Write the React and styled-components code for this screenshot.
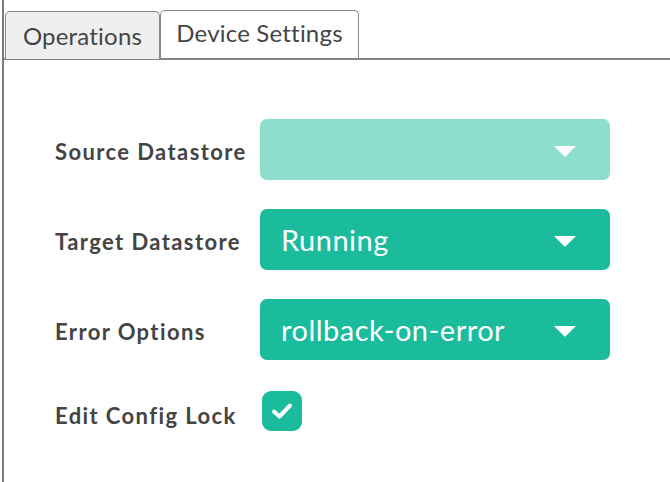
import React from 'react';
import styled, { createGlobalStyle } from 'styled-components';

const GlobalStyle = createGlobalStyle`
  html, body {
    margin: 0;
    padding: 0;
    background: #fff;
    font-family: Lato, "Open Sans", sans-serif;
  }
`;

const Panel = styled.div`
  width: 670px;
  height: 482px;
  box-sizing: border-box;
  margin-left: 2px;
  border-left: 2px solid #7a7a7a;
`;

const TabBar = styled.div`
  display: flex;
  padding: 10px 0 0 1px;
  border-bottom: 2px solid #858585;
`;

const Tab = styled.div`
  box-sizing: border-box;
  height: 48px;
  width: ${(p) => p.width}px;
  margin-bottom: -1px;
  display: flex;
  align-items: center;
  justify-content: center;
  font-size: 24px;
  letter-spacing: 0.2px;
  color: #454545;
  background: ${(p) => (p.active ? '#efefef' : '#fff')};
  border: 1.5px solid #8a8a8a;
  border-bottom: none;
  border-radius: 5px 5px 0 0;
  padding-bottom: ${(p) => (p.active ? '0' : '4px')};
  margin-top: ${(p) => (p.active ? '1px' : '0')};
`;

const Form = styled.div`
  display: flex;
  flex-direction: column;
  gap: 29px;
  padding: 59px 0 0 51px;
`;

const Row = styled.div`
  display: flex;
  align-items: center;
  padding-top: ${(p) => (p.last ? '2px' : '0')};
`;

const Label = styled.div`
  width: 205px;
  font-size: 22px;
  font-weight: 700;
  letter-spacing: 1.4px;
  color: #444;
  padding-top: ${(p) => (p.last ? '8px' : '3px')};
`;

const Select = styled.div`
  box-sizing: border-box;
  width: 350px;
  height: 61px;
  border-radius: 7px;
  background: ${(p) => (p.disabled ? '#8edece' : '#1abc9c')};
  display: flex;
  align-items: center;
  justify-content: space-between;
  padding: 0 33px 0 21px;
  color: #fff;
  font-size: 29px;
  letter-spacing: 0.5px;
`;

const Caret = styled.svg`
  width: 24px;
  height: 12px;
  margin-top: 2px;
`;

const Check = styled.div`
  width: 40px;
  height: 40px;
  margin: 0 0 0 2px;
  border-radius: 9px;
  background: #1abc9c;
  display: flex;
  align-items: center;
  justify-content: center;
`;

const Dropdown = ({ value, disabled }) => (
  <Select disabled={disabled}>
    <span>{value}</span>
    <Caret viewBox="0 0 24 12">
      <path d="M1 1 H23 L13 11 Q12 12 11 11 Z" fill="#fff" />
    </Caret>
  </Select>
);

export default function App() {
  return (
    <>
      <GlobalStyle />
      <Panel>
        <TabBar>
          <Tab active width={155}>Operations</Tab>
          <Tab width={199}>Device Settings</Tab>
        </TabBar>
        <Form>
          <Row>
            <Label>Source Datastore</Label>
            <Dropdown disabled value="" />
          </Row>
          <Row>
            <Label>Target Datastore</Label>
            <Dropdown value="Running" />
          </Row>
          <Row>
            <Label>Error Options</Label>
            <Dropdown value="rollback-on-error" />
          </Row>
          <Row last>
            <Label last>Edit Config Lock</Label>
            <Check>
              <svg width="22" height="18" viewBox="0 0 22 18">
                <path d="M3 9.5 L8.5 14.5 L19 3.5" fill="none" stroke="#fff" strokeWidth="4" strokeLinecap="round" strokeLinejoin="round" />
              </svg>
            </Check>
          </Row>
        </Form>
      </Panel>
    </>
  );
}
